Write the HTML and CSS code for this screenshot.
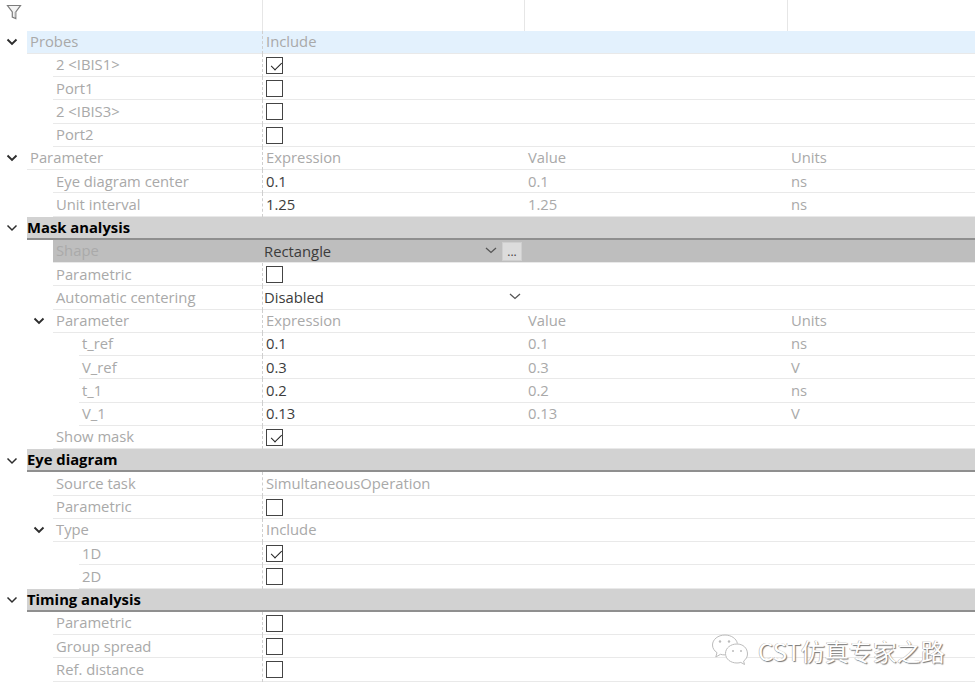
FILE: index.html
```html
<!DOCTYPE html>
<html lang="en">
<head>
<meta charset="utf-8">
<title>Eye diagram properties</title>
<link rel="stylesheet" href="styles.css">
</head>
<body>
<div class="tree">
  <div class="filter-bar">
    <div class="filter-cell"><svg class="funnel" viewBox="0 0 16 16" width="16" height="16"><path d="M1.500 1.500h13L9.800 8v6.500L6.300 13V8z" fill="#f4f4f4" stroke="#7c7c7c" stroke-width="1.200"/><path d="M9 8v5" stroke="#bbb" fill="none"/></svg></div>
    <div class="filter-cell"></div><div class="filter-cell"></div><div></div>
  </div>

  <div class="row d0 sel"><span class="gut"><svg class="chev" viewBox="0 0 12 8"><path d="M1.500 1.500 6 6l4.500-4.500"/></svg></span><div class="body"><span class="lab">Probes</span><span class="val dim">Include</span><span></span><span></span></div></div>
  <div class="row d1"><span class="gut"></span><div class="body"><span class="lab">2 &lt;IBIS1&gt;</span><span class="val"><i class="cb on"></i></span><span></span><span></span></div></div>
  <div class="row d1"><span class="gut"></span><div class="body"><span class="lab">Port1</span><span class="val"><i class="cb"></i></span><span></span><span></span></div></div>
  <div class="row d1"><span class="gut"></span><div class="body"><span class="lab">2 &lt;IBIS3&gt;</span><span class="val"><i class="cb"></i></span><span></span><span></span></div></div>
  <div class="row d1"><span class="gut"></span><div class="body"><span class="lab">Port2</span><span class="val"><i class="cb"></i></span><span></span><span></span></div></div>

  <div class="row d0"><span class="gut"><svg class="chev" viewBox="0 0 12 8"><path d="M1.500 1.500 6 6l4.500-4.500"/></svg></span><div class="body"><span class="lab">Parameter</span><span class="val dim">Expression</span><span class="cell">Value</span><span class="cell">Units</span></div></div>
  <div class="row d1"><span class="gut"></span><div class="body"><span class="lab">Eye diagram center</span><span class="val">0.1</span><span class="cell">0.1</span><span class="cell">ns</span></div></div>
  <div class="row d1"><span class="gut"></span><div class="body"><span class="lab">Unit interval</span><span class="val">1.25</span><span class="cell">1.25</span><span class="cell">ns</span></div></div>

  <div class="row d0 sec"><span class="gut"><svg class="chev thin" viewBox="0 0 12 8"><path d="M1.500 1.500 6 6l4.500-4.500"/></svg></span><div class="body"><span class="lab">Mask analysis</span></div></div>
  <div class="row d1 act"><span class="gut"></span><div class="body"><span class="lab">Shape</span><span class="val combo">Rectangle<svg class="drop" viewBox="0 0 12 7"><path d="M1 1l5 4.500L11 1"/></svg><b class="more">...</b></span><span></span><span></span></div></div>
  <div class="row d1"><span class="gut"></span><div class="body"><span class="lab">Parametric</span><span class="val"><i class="cb"></i></span><span></span><span></span></div></div>
  <div class="row d1"><span class="gut"></span><div class="body"><span class="lab">Automatic centering</span><span class="val wide">Disabled<svg class="drop" viewBox="0 0 12 7"><path d="M1 1l5 4.500L11 1"/></svg></span><span></span><span></span></div></div>
  <div class="row d1"><span class="gut"><svg class="chev" viewBox="0 0 12 8"><path d="M1.500 1.500 6 6l4.500-4.500"/></svg></span><div class="body"><span class="lab">Parameter</span><span class="val dim">Expression</span><span class="cell">Value</span><span class="cell">Units</span></div></div>
  <div class="row d2"><span class="gut"></span><div class="body"><span class="lab">t_ref</span><span class="val">0.1</span><span class="cell">0.1</span><span class="cell">ns</span></div></div>
  <div class="row d2"><span class="gut"></span><div class="body"><span class="lab">V_ref</span><span class="val">0.3</span><span class="cell">0.3</span><span class="cell">V</span></div></div>
  <div class="row d2"><span class="gut"></span><div class="body"><span class="lab">t_1</span><span class="val">0.2</span><span class="cell">0.2</span><span class="cell">ns</span></div></div>
  <div class="row d2"><span class="gut"></span><div class="body"><span class="lab">V_1</span><span class="val">0.13</span><span class="cell">0.13</span><span class="cell">V</span></div></div>
  <div class="row d1"><span class="gut"></span><div class="body"><span class="lab">Show mask</span><span class="val"><i class="cb on"></i></span><span></span><span></span></div></div>

  <div class="row d0 sec"><span class="gut"><svg class="chev thin" viewBox="0 0 12 8"><path d="M1.500 1.500 6 6l4.500-4.500"/></svg></span><div class="body"><span class="lab">Eye diagram</span></div></div>
  <div class="row d1"><span class="gut"></span><div class="body"><span class="lab">Source task</span><span class="val dim">SimultaneousOperation</span><span></span><span></span></div></div>
  <div class="row d1"><span class="gut"></span><div class="body"><span class="lab">Parametric</span><span class="val"><i class="cb"></i></span><span></span><span></span></div></div>
  <div class="row d1"><span class="gut"><svg class="chev" viewBox="0 0 12 8"><path d="M1.500 1.500 6 6l4.500-4.500"/></svg></span><div class="body"><span class="lab">Type</span><span class="val dim">Include</span><span></span><span></span></div></div>
  <div class="row d2"><span class="gut"></span><div class="body"><span class="lab">1D</span><span class="val"><i class="cb on"></i></span><span></span><span></span></div></div>
  <div class="row d2"><span class="gut"></span><div class="body"><span class="lab">2D</span><span class="val"><i class="cb"></i></span><span></span><span></span></div></div>

  <div class="row d0 sec"><span class="gut"><svg class="chev thin" viewBox="0 0 12 8"><path d="M1.500 1.500 6 6l4.500-4.500"/></svg></span><div class="body"><span class="lab">Timing analysis</span></div></div>
  <div class="row d1"><span class="gut"></span><div class="body"><span class="lab">Parametric</span><span class="val"><i class="cb"></i></span><span></span><span></span></div></div>
  <div class="row d1"><span class="gut"></span><div class="body"><span class="lab">Group spread</span><span class="val"><i class="cb"></i></span><span></span><span></span></div></div>
  <div class="row d1"><span class="gut"></span><div class="body"><span class="lab">Ref. distance</span><span class="val"><i class="cb"></i></span><span></span><span></span></div></div>

  <div class="mark">
    <svg class="wechat" viewBox="0 0 40 34" width="40" height="34"><path d="M14 1C7 1 1.500 5.500 1.500 11c0 3.200 1.800 5.800 4.500 7.700L4.800 23l4.700-2.700c1.400.4 2.800.6 4.500.6" fill="#fff" stroke="#bcbcbc"/><path d="M14 1c6 0 11.500 3.500 12.400 8.500" fill="none" stroke="#bcbcbc"/><path d="M26 10c-6.500 0-11.500 4-11.500 9.500S19.500 29 26 29c1.400 0 2.700-.2 3.800-.6l3.700 2.100-.9-3.400c2.400-1.700 3.900-4.300 3.900-7.100C36.500 14 32 10 26 10z" fill="#fff" stroke="#bcbcbc"/><circle cx="9" cy="7.500" r="1.200" fill="#bbb"/><circle cx="18" cy="7.500" r="1.200" fill="#bbb"/><circle cx="22" cy="17" r="1" fill="#bbb"/><circle cx="30" cy="17" r="1" fill="#bbb"/></svg>
    <span class="mark-text">CST仿真专家之路</span>
  </div>
</div>
</body>
</html>
```
FILE: styles.css
```css
* { box-sizing: border-box; }
html, body { margin: 0; padding: 0; background: #fff; }
body { width: 975px; height: 694px; overflow: hidden; font-family: "Open Sans", "Noto Sans", "Noto Sans CJK SC", sans-serif; font-size: 14.8px; color: #a9a9a9; }
.tree { position: relative; width: 975px; height: 694px; }
.filter-bar { height: 30.5px; display: grid; grid-template-columns: 263px 262px 263px 1fr; }
.filter-cell { border-right: 1px solid #e6e6e6; padding: 4px 0 0 6px; }
.funnel { display: block; }
.row { height: 23.25px; display: flex; }
.gut { flex: none; width: var(--i); display: flex; align-items: center; justify-content: flex-end; padding-right: var(--gp); }
.d0 { --i: 27px; --gp: 9px; }
.d1 { --i: 53px; --gp: 8px; }
.d2 { --i: 79px; --gp: 8px; }
.body { flex: 1; min-width: 0; display: grid; grid-template-columns: calc(262px - var(--i)) 263px 263px 1fr; align-items: center; border-bottom: 1px solid #e9e9e9; line-height: 20px; white-space: nowrap; }
.lab { padding: 0 0 2px 3px; }
.val { position: relative; align-self: stretch; display: flex; align-items: center; padding: 0 0 2px 3px; color: #3c3c3c; border-left: 1px dashed #cfcfcf; height: 23.25px; }
.val.dim { color: #a9a9a9; }
.cell { padding: 0 0 2px 3px; }
.chev { width: 12px; height: 8px; fill: none; stroke: #2d2d2d; stroke-width: 1.9; }
.chev.thin { stroke-width: 1.5; }
.sel .body { background: #e3f1fd; }
.sec .body { display: block; background: #d2d2d2; border-bottom: 2px solid #8f8f8f; color: #000; font-weight: 700; font-size: 14.8px; line-height: 20px; }
.sec .lab { padding: 0; }
.act .body { background: #bebebe; }
.act .lab { color: #aaa; }
.val.combo { width: 260px; padding: 0 0 0 1px; border-left-color: transparent; }
.val.wide { padding: 0 0 2px 1px; }
.drop { position: absolute; width: 12px; height: 7px; fill: none; stroke: #555; stroke-width: 1.3; }
.combo .drop { left: 222px; top: 7px; }
.wide .drop { left: 246px; top: 7px; }
.more { position: absolute; left: 239px; top: 2px; width: 20px; height: 19px; background: #dcdcdc; border: 1px solid #cfcfcf; font-weight: 400; font-size: 12px; line-height: 17px; text-align: center; color: #444; }
.cb { display: block; width: 17px; height: 17px; margin-top: 2px; border: 1px solid #444; background: #fff; position: relative; }
.cb.on::after { content: ""; position: absolute; left: 3px; top: 1px; width: 9px; height: 5px; border: solid #222; border-width: 0 0 1.6px 1.6px; transform: rotate(-45deg) translate(-1px, 3px); }
.mark { position: absolute; left: 711px; top: 633px; display: flex; align-items: center; gap: 7px; }
.wechat { display: block; }
.mark-text { font-family: "Noto Sans CJK SC", "Liberation Sans", sans-serif; font-size: 24px; color: #fff; text-shadow: 1px 1px 1px #777, -0.5px -0.5px 0 #aaa; }
```
